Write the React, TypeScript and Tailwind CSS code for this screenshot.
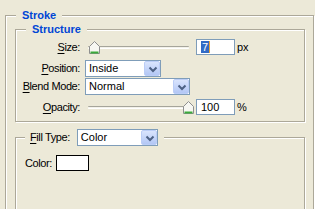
import React from "react";

function Chevron() {
  return (
    <svg width="16" height="15" viewBox="0 0 16 15" className="block">
      <path d="M4.5 5.5 L8 9 L11.5 5.5" fill="none" stroke="#4D6185" strokeWidth="2" />
    </svg>
  );
}

function Combo({ className, value }: { className: string; value: string }) {
  return (
    <div className={`flex items-stretch h-[17px] border border-[#7F9DB9] bg-white ${className}`}>
      <span className="flex-1 pl-[3px] leading-[15px] tracking-normal">{value}</span>
      <div className="w-[16px] rounded-[2px] border border-[#BBCDF7] bg-linear-to-b from-[#D9E4FD] to-[#B3C7F5]">
        <Chevron />
      </div>
    </div>
  );
}

function Thumb() {
  return (
    <svg width="11" height="13" viewBox="0 0 11 13" className="block">
      <path d="M0.5 5.5 L5.5 0.5 L10.5 5.5 L10.5 12.5 L0.5 12.5 Z" fill="#F7F7F2" stroke="#8E8F8F" />
      <path d="M1.5 11.5 L9.5 11.5" stroke="#3BAA3B" strokeWidth="2" />
    </svg>
  );
}

function Slider({ thumbClass }: { thumbClass: string }) {
  return (
    <div className="relative w-[101px] h-[18px] ml-[8px]">
      <div className="mt-[8px] h-[3px] rounded-[1px] border-t border-[#A6A59B] bg-[#F3F2EA] border-b border-b-white" />
      <div className={`absolute top-[3px] ${thumbClass}`}>
        <Thumb />
      </div>
    </div>
  );
}

function Label({ acc, rest }: { acc: string; rest: string }) {
  return (
    <span className="w-[64px] text-right shrink-0">
      <span className="underline underline-offset-[2px]">{acc}</span>
      {rest}
    </span>
  );
}

export default function App() {
  return (
    <div className="w-[315px] h-[209px] overflow-hidden bg-[#ECE9D8] font-['Liberation_Sans',Arial,sans-serif] text-[11px] leading-[13px] text-black tracking-[-0.4px] pt-[15px] pl-[5px]">
      <div className="w-[309px] border border-[#ACA899] shadow-[inset_1px_1px_0_#fff,1px_1px_0_#fff] pl-[9px] pr-[8px]">
        <div className="flex">
          <span className="-mt-[7px] ml-[1px] px-[6px] h-[13px] bg-[#ECE9D8] font-bold text-[#0046D5] tracking-normal">
            Stroke
          </span>
        </div>

        <div className="mt-[7px] border border-[#ACA899] shadow-[inset_1px_1px_0_#fff,1px_1px_0_#fff] pb-[5px]">
          <div className="flex">
            <span className="-mt-[7px] ml-[10px] px-[6px] h-[13px] bg-[#ECE9D8] font-bold text-[#0046D5] tracking-normal">
              Structure
            </span>
          </div>

          <div className="mt-[2px] h-[18px] flex items-center">
            <Label acc="S" rest="ize:" />
            <Slider thumbClass="left-[1px]" />
            <div className="ml-[7px] w-[39px] h-[16px] border border-[#7F9DB9] bg-white flex items-center pl-[4px]">
              <span className="h-[12px] leading-[12px] bg-[#316AC5] text-white px-[1px]">7</span>
              <span className="w-[1px] h-[12px] bg-[#E8A33A]" />
            </div>
            <span className="ml-[2px] tracking-normal">px</span>
          </div>

          <div className="mt-[4px] h-[17px] flex items-center">
            <Label acc="P" rest="osition:" />
            <Combo className="ml-[5px] w-[76px]" value="Inside" />
          </div>

          <div className="mt-[1px] h-[17px] flex items-center">
            <Label acc="B" rest="lend Mode:" />
            <Combo className="ml-[5px] w-[105px]" value="Normal" />
          </div>

          <div className="mt-[3px] h-[18px] flex items-center">
            <Label acc="O" rest="pacity:" />
            <Slider thumbClass="left-[95px]" />
            <div className="ml-[7px] w-[39px] h-[16px] border border-[#7F9DB9] bg-white flex items-center pl-[4px] tracking-normal">
              100
            </div>
            <span className="ml-[2px]">%</span>
          </div>
        </div>

        <div className="mt-[15px] h-[90px] border border-[#ACA899] shadow-[inset_1px_1px_0_#fff,1px_1px_0_#fff]">
          <div className="flex">
            <div className="-mt-[9px] ml-[9px] pl-[5px] pr-[6px] h-[17px] bg-[#ECE9D8] flex items-center">
              <span>
                <span className="underline underline-offset-[2px]">F</span>ill Type:
              </span>
              <Combo className="ml-[7px] w-[81px]" value="Color" />
            </div>
          </div>
          <div className="mt-[9px] h-[16px] pl-[9px] flex items-center">
            <span>Color:</span>
            <div className="ml-[4px] w-[33px] h-[16px] border border-black bg-white" />
          </div>
        </div>
      </div>
    </div>
  );
}
